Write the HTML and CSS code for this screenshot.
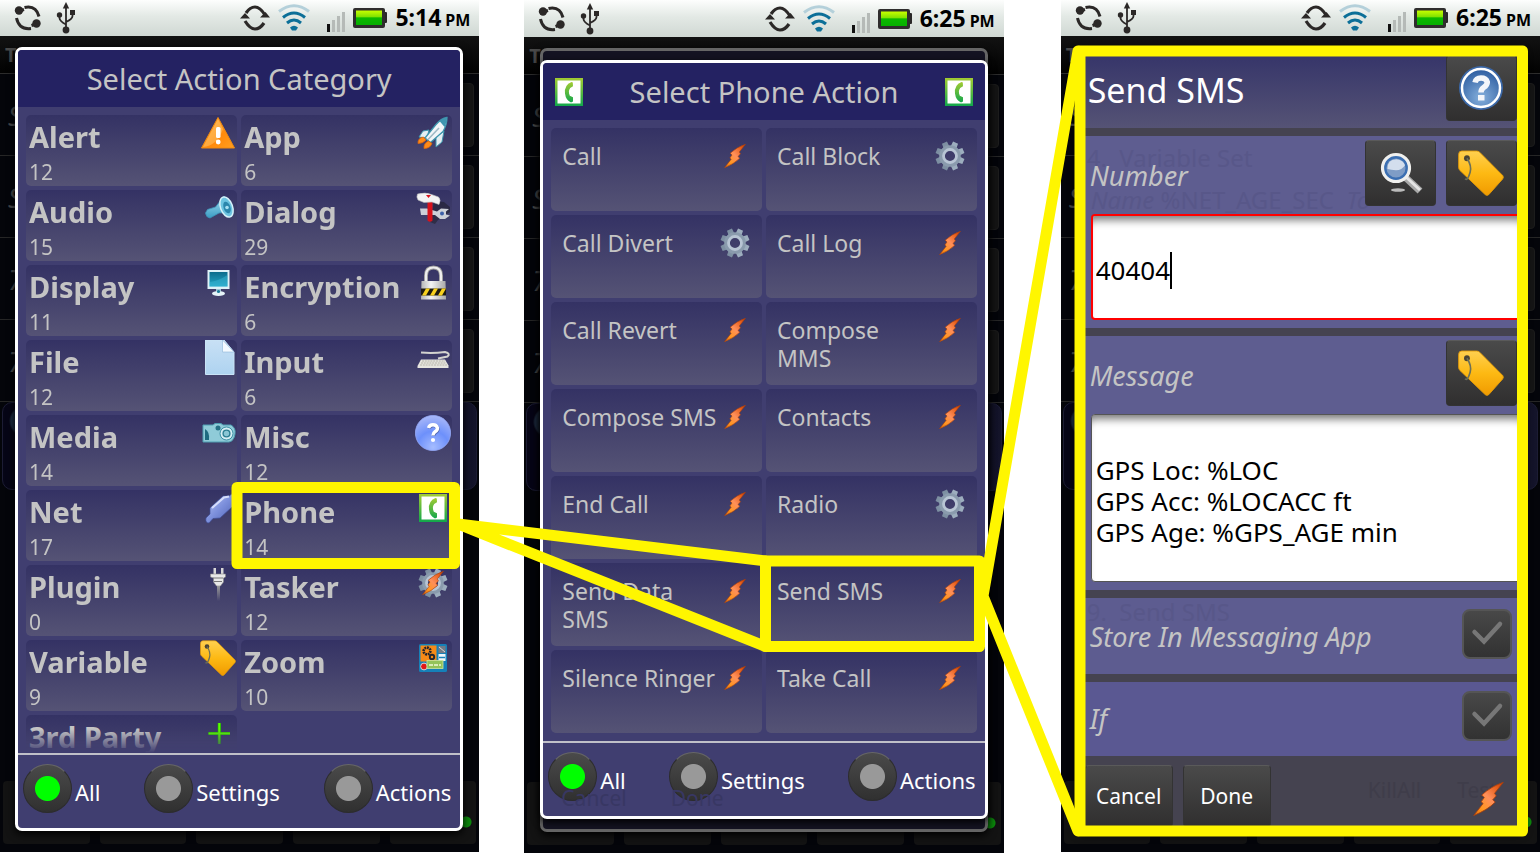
FILE: index.html
```html
<!DOCTYPE html>
<html lang="en">
<head>
<meta charset="utf-8">
<title>Tasker: Send SMS action</title>
<link rel="stylesheet" href="styles.css">
</head>
<body>
<svg class="defs" aria-hidden="true">
  <defs>
    <linearGradient id="gBolt" x1="1" y1="0" x2="0" y2="1"><stop offset="0" stop-color="#c23c08"/><stop offset=".2" stop-color="#e8601c"/><stop offset=".48" stop-color="#ff8f5a"/><stop offset=".75" stop-color="#ff9620"/><stop offset="1" stop-color="#e8700c"/></linearGradient>
    <linearGradient id="gOrange" x1="0" y1="0" x2="1" y2="1"><stop offset="0" stop-color="#ffb648"/><stop offset=".6" stop-color="#ff8a0c"/><stop offset="1" stop-color="#ffa020"/></linearGradient>
    <linearGradient id="gTag" x1="0" y1="0" x2="0" y2="1"><stop offset="0" stop-color="#ffd050"/><stop offset=".5" stop-color="#fdb913"/><stop offset="1" stop-color="#f09a00"/></linearGradient>
    <linearGradient id="gGreen" x1="0" y1="0" x2="0" y2="1"><stop offset="0" stop-color="#a3cc33"/><stop offset="1" stop-color="#12a74c"/></linearGradient>
    <linearGradient id="gGear" x1="0" y1="0" x2="0" y2="1"><stop offset="0" stop-color="#9fb0c0"/><stop offset="1" stop-color="#7b8da0"/></linearGradient>
    <linearGradient id="gBatt" x1="0" y1="0" x2="0" y2="1"><stop offset="0" stop-color="#c8ff00"/><stop offset=".45" stop-color="#7fe000"/><stop offset=".5" stop-color="#0cb800"/><stop offset="1" stop-color="#06b000"/></linearGradient>
    <linearGradient id="gTeal" x1="0" y1="0" x2="0" y2="1"><stop offset="0" stop-color="#0b6c8c"/><stop offset="1" stop-color="#25a9c9"/></linearGradient>
    <linearGradient id="gHorn" x1="0" y1="0" x2="0" y2="1"><stop offset="0" stop-color="#a8e0f2"/><stop offset="1" stop-color="#3a9cc4"/></linearGradient>
    <linearGradient id="gPaper" x1="0" y1="0" x2="0" y2="1"><stop offset="0" stop-color="#c8e0f5"/><stop offset="1" stop-color="#aed3f0"/></linearGradient>
    <linearGradient id="gSilver" x1="0" y1="0" x2="1" y2="0"><stop offset="0" stop-color="#b4b4b4"/><stop offset=".4" stop-color="#f4f4f4"/><stop offset="1" stop-color="#a8a8a8"/></linearGradient>
    <linearGradient id="gJack" x1="0" y1="0" x2="1" y2="1"><stop offset="0" stop-color="#c2cdf6"/><stop offset=".5" stop-color="#7d90dc"/><stop offset="1" stop-color="#4a5cae"/></linearGradient>
    <radialGradient id="gMisc" cx=".5" cy=".9" r=".9"><stop offset="0" stop-color="#a5bcff"/><stop offset=".5" stop-color="#6d90fb"/><stop offset="1" stop-color="#a9b8f8"/></radialGradient>
    <radialGradient id="gHelp" cx=".5" cy=".75" r=".75"><stop offset="0" stop-color="#86b0dc"/><stop offset="1" stop-color="#2c5ca0"/></radialGradient>
    <linearGradient id="gCord" x1="0" y1="0" x2="0" y2="1"><stop offset="0" stop-color="#999"/><stop offset="1" stop-color="#999" stop-opacity="0"/></linearGradient>

    <symbol id="i-swap" viewBox="0 0 28 28"><g fill="none" stroke="#2b2827" stroke-width="3"><path d="M10.500 3.500Q22 1 25 12.500"/><path d="M2.500 14Q5 26 17 24.500"/></g><circle cx="5" cy="6.500" r="4.200" fill="#2b2827"/><circle cx="22.500" cy="19.500" r="4.200" fill="#2b2827"/><path d="M5 7l5-1.500M22 20l-4.500 1.500" stroke="#2b2827" stroke-width="3"/></symbol>
    <symbol id="i-usb" viewBox="0 0 20 32"><g fill="none" stroke="#2b2827" stroke-width="1.800"><path d="M10 5v23M3.500 13v3q0 3 6.500 6.500M16.500 11v3q0 3-6.500 6"/></g><path d="M10 0l3.200 6.500H6.800z" fill="#2b2827"/><circle cx="10" cy="28" r="3.400" fill="#2b2827"/><circle cx="3.500" cy="13" r="2.700" fill="#2b2827"/><path d="M14 8h5v5h-5z" fill="#2b2827"/></symbol>
    <symbol id="i-sync" viewBox="0 0 30 26"><g fill="none" stroke="#2b2827" stroke-width="3.200"><path d="M6 8Q10 2 15 2t10 8"/><path d="M24 18q-4 6-9 6T5 16"/></g><path d="M20 12.500h10L25.500 7zM0 13.500h10L5 8z" fill="#2b2827" stroke="none"/></symbol>
    <symbol id="i-wifi" viewBox="0 0 32 28"><g fill="none" stroke-width="3"><path d="M1 7.500q15-11.500 30 0" stroke="#b4d0da"/><path d="M5 13.500q11-9 22 0" stroke="#0c6f98"/><path d="M9 19q7-6 14 0" stroke="#0c6f98"/></g><path d="M12 23.500q4-3.500 8 0l-2 3h-4z" fill="#0c6f98"/></symbol>
    <symbol id="i-signal" viewBox="0 0 18 20"><path d="M0 12h3v8H0z" fill="#111"/><path d="M5 8h3v12H5zM10 4h3v16h-3zM15 0h3v20h-3z" fill="#b5bab7"/></symbol>
    <symbol id="i-batt" viewBox="0 0 34 22"><path d="M30 5h3a1 1 0 0 1 1 1v9a1 1 0 0 1-1 1h-3z" fill="#2a2828"/><rect x="0" y="1" width="32" height="20" rx="2" fill="#2f2d2d"/><rect x="3" y="3.500" width="26" height="14.500" fill="url(#gBatt)"/></symbol>

    <symbol id="i-bolt" viewBox="0 0 22 24"><path d="M21.500.2Q13 3 6.200 9.200L8 11l-2.200 3 1.400 1.200L.5 23.700Q10 20 15.800 14.200L14 12.500l2.500-2.700L15.300 8z" fill="url(#gBolt)" stroke="#a8400e" stroke-width=".6"/></symbol>
    <symbol id="i-gear" viewBox="0 0 30 30"><g fill="url(#gGear)"><g transform="rotate(22.500 15 15)"><path d="M12 5.500L12.300.5h5.400l.3 5zM12 24.500l.3 5h5.400l.3-5z"/><path d="M12 5.500L12.300.5h5.400l.3 5zM12 24.500l.3 5h5.400l.3-5z" transform="rotate(45 15 15)"/><path d="M12 5.500L12.300.5h5.400l.3 5zM12 24.500l.3 5h5.400l.3-5z" transform="rotate(90 15 15)"/><path d="M12 5.500L12.300.5h5.400l.3 5zM12 24.500l.3 5h5.400l.3-5z" transform="rotate(135 15 15)"/></g></g><circle cx="15" cy="15" r="8.300" fill="none" stroke="#8a9bad" stroke-width="5"/><circle cx="15" cy="15" r="6.500" fill="none" stroke="#b8c5d4" stroke-width="2.800"/></symbol>
    <symbol id="i-phone" viewBox="0 0 36 36"><rect x="4" y="4" width="28" height="28" fill="url(#gGreen)"/><rect x="6.500" y="6.500" width="23" height="23" fill="#fff"/><path d="M20.500 8q-7.500 3-6.500 11.500.8 6.800 6 9l2-1v-4.200l-3.200-1.600q-2-4.300.4-7.700L22 12.300 21.800 8.500z" fill="url(#gGreen)"/></symbol>
    <symbol id="i-alert" viewBox="0 0 36 36"><path d="M18 2.500L34.500 33H1.500z" fill="url(#gOrange)" stroke="#f08a10" stroke-width="1" stroke-linejoin="round"/><path d="M18 4L3 32q14-1 20-18z" fill="#ffc56a" opacity=".5"/><rect x="16" y="12" width="4.500" height="11" rx="1.500" fill="#fff"/><circle cx="18.200" cy="27" r="2.400" fill="#fff"/></symbol>
    <symbol id="i-rocket" viewBox="0 0 36 36"><path d="M14 15l-6 1-4 6 8 1zM21 22v10l6-5 2-11z" fill="#e4eef2" stroke="#3d95ad" stroke-width="1"/><path d="M32 2.500q-6 1-11 7L10 23l5.500 4.500L28 16.500q4-7 4-14z" fill="#f1f5f8" stroke="#3d95ad" stroke-width="1.300"/><path d="M32 2.500q-4 .5-7.500 3.500l5 6q2.500-5 2.500-9.500z" fill="#3f95b0"/><path d="M13 24.500L24 13" stroke="#9cb8c4" stroke-width="1.500"/><path d="M8.500 22q-6 1-5.500 6.500 5 0 8-3.500zM13.500 26q-5 2-4.500 7.500 6 0 8-5z" fill="#ff8b17" stroke="#d86410" stroke-width=".8"/></symbol>
    <symbol id="i-horn" viewBox="0 0 36 36"><path d="M5.500 23l2-3.500 8-2.500L24 6l9 16-14 1-9 5q-4-.5-4.500-5z" fill="url(#gHorn)" stroke="#3c93b8" stroke-width=".8"/><ellipse cx="26.500" cy="17" rx="6" ry="10.500" transform="rotate(-20 26.500 17)" fill="#6cc3e0" stroke="#d5f2fa" stroke-width="1.500"/><ellipse cx="27" cy="17.500" rx="3.400" ry="6" transform="rotate(-20 27 17.500)" fill="#2b86ac"/><circle cx="27" cy="17.500" r="1.800" fill="#a8e0f2"/></symbol>
    <symbol id="i-tools" viewBox="0 0 36 36"><path d="M15 32l5 2 3-4 12-8 0-5-6-5-10-1z" fill="#111" opacity=".4"/><path d="M5 18.500h7l10 3 4-3 8 .5-3 2.500v3l4 1-5 3.500h-5l-5-4H6z" fill="#cdd0d8"/><circle cx="27" cy="23.500" r="2" fill="#3c5fa8"/><path d="M12.500 12h5v18.500q-2.500 2.500-5 0z" fill="#d8121b"/><path d="M2.500 4q8-2 14 .5l7 2.500q3 3 .5 7.500l-7-2.500-8 .5-6-2.500q-2-3-.5-6z" fill="#f3f3f3" stroke="#bbb" stroke-width=".6"/><path d="M11 5h5l-2.500 3z" fill="#d8121b"/></symbol>
    <symbol id="i-monitor" viewBox="0 0 36 36"><rect x="7.500" y="5" width="22" height="19" fill="#dff2f8"/><rect x="9.500" y="7" width="18" height="14.500" fill="url(#gTeal)"/><path d="M9.500 17q9-1 18-7v11.500h-18z" fill="#3fbad6" opacity=".45"/><path d="M16 24h5v3.500h-5z" fill="#9fc7d6"/><ellipse cx="18.500" cy="28.500" rx="6.500" ry="2.500" fill="#e5f3f8"/><circle cx="18.500" cy="26.500" r="1.600" fill="#1a7c98"/></symbol>
    <symbol id="i-lock" viewBox="0 0 36 36"><path d="M11 18V10.500Q11 2.500 18.500 2.500T26 10.500V18" fill="none" stroke="#999" stroke-width="4"/><path d="M11 18V10.500Q11 2.500 18.500 2.500T26 10.500V18" fill="none" stroke="#eee" stroke-width="2.200"/><path d="M6.500 16h24l.5 18.500H6z" fill="url(#gSilver)"/><path d="M6 23.500h25v7H6z" fill="#1d1a10"/><path d="M7 30.500l4-7h4l-4 7zM15 30.500l4-7h4l-4 7zM23 30.500l4-7h4l-4 7z" fill="#f7d01d"/></symbol>
    <symbol id="i-file" viewBox="0 0 36 36"><path d="M5.500 0H24l10 12v22.500H5.500z" fill="url(#gPaper)" stroke="#c9e3f6" stroke-width="1"/><path d="M22.500 0v12H34z" fill="#f4faff" stroke="#8fb7d8" stroke-width=".6"/></symbol>
    <symbol id="i-keyboard" viewBox="0 0 36 36"><path d="M6 12.500q12 1 24-.5 6 1.500 2.500 4.500L23 18.500" fill="none" stroke="#d3d3cf" stroke-width="2"/><path d="M6 19.500h24l3.500 6V28h-31v-2z" fill="#e6e5df"/><path d="M7 21h23M6 23h25M5 25h27" stroke="#aaa79c" stroke-width=".8" stroke-dasharray="2 .8"/></symbol>
    <symbol id="i-camera" viewBox="0 0 36 36"><path d="M3 10h10l2-1.500h6L23 10h8q5 3 4 9-1 7-6 8H3z" fill="#8fcbd8" stroke="#4f9fb2" stroke-width="1"/><path d="M5 14q5 3 4 11H5z" fill="#1d6b80"/><circle cx="18" cy="13" r="2.500" fill="#256f84"/><circle cx="26.500" cy="18.500" r="6.500" fill="#d6eef4" stroke="#3f92a6" stroke-width="1"/><circle cx="26.500" cy="18.500" r="3.400" fill="#8ac6d4" stroke="#2c7e92" stroke-width="1.400"/></symbol>
    <symbol id="i-misc" viewBox="0 0 36 36"><circle cx="18" cy="18" r="17.600" fill="url(#gMisc)" stroke="#96aaf8" stroke-width=".8"/><path d="M14 13.500q1-3 4.500-3t4.500 3.200q0 2.300-2.500 3.800-2 1.300-2 3.500" fill="none" stroke="#35437c" stroke-width="3.400" opacity=".6"/><path d="M13.500 13q1-3.200 4.500-3.200t4.500 3.200q0 2.300-2.500 3.800-2 1.300-2 3.700" fill="none" stroke="#fff" stroke-width="3.400"/><circle cx="18" cy="25" r="2.100" fill="#fff"/></symbol>
    <symbol id="i-jack" viewBox="0 0 36 36"><path d="M6 28l4-4v-6L23 6h6l7-5v13l-4 3-12 11-7 .5L9 33q-4 0-3-5z" fill="url(#gJack)" stroke="#3f4d96" stroke-width=".7"/><path d="M12 18L24 7.500l5-1" stroke="#d5ddfb" stroke-width="2" fill="none"/></symbol>
    <symbol id="i-plug" viewBox="0 0 36 36"><path d="M13.500 3h2.500v7h-2.500zM21 3h2.500v7H21z" fill="#d8d8d8"/><path d="M10.500 9h15v3l-2 1v4l-3 4h-4l-3-4v-4l-3-1z" fill="#e8e8e8" stroke="#888" stroke-width=".6"/><path d="M13 13h10M14 16.500h8" stroke="#777" stroke-width="1"/><path d="M17 21h3v15h-3z" fill="url(#gCord)"/></symbol>
    <symbol id="i-tag" viewBox="0 0 36 36"><path d="M3 .8h11.500q1.500 0 2.500 1L35 20q1 1.300 0 2.600L24 35q-1.300 1-2.600 0L1.500 16q-1-1-1-2.500V3.500Q.5.800 3 .8z" fill="url(#gTag)" stroke="#e39a08" stroke-width=".7"/><circle cx="7" cy="6.500" r="2.300" fill="#4b4434"/><path d="M7 6.500q4 6 2.500 11-2 7-4 5" fill="none" stroke="#6d7058" stroke-width="1.300"/></symbol>
    <symbol id="i-zoom" viewBox="0 0 36 36"><rect x="4" y="4" width="28" height="28" rx="1.500" fill="#1580b8"/><rect x="5.500" y="5.500" width="16" height="16" fill="#f58a18"/><circle cx="12" cy="11" r="3.400" fill="none" stroke="#22242c" stroke-width="2.600" stroke-dasharray="1.900 .7"/><circle cx="17" cy="17" r="2.200" fill="none" stroke="#22242c" stroke-width="1.900"/><rect x="23.500" y="6" width="7" height="7" fill="#707b86"/><path d="M24 7l6 5" stroke="#d8d8d8"/><rect x="23.500" y="14" width="7" height="7" fill="#eef6fa"/><path d="M24 17.500h6" stroke="#1580b8" stroke-width="1.500"/><circle cx="9" cy="26.500" r="3.400" fill="#e01818" stroke="#d5d5d5" stroke-width="1"/><rect x="12" y="20.500" width="16" height="8" fill="#94c35a" stroke="#cde5a0" stroke-width=".8"/><path d="M14 25h12" stroke="#d9ecb8" stroke-width="2" stroke-dasharray="4 1"/></symbol>
    <symbol id="i-plus" viewBox="0 0 36 36"><path d="M8.500 18.500h21.500M19.300 8v21" stroke="#1fae00" stroke-width="3.200"/><path d="M8.500 18.500h21.500M19.300 8v21" stroke="#5cff00" stroke-width="2"/></symbol>
    <symbol id="i-tasker" viewBox="0 0 36 36"><use href="#i-gear" x="3" y="3" width="30" height="30"/><use href="#i-bolt" x="7" y="6" width="22" height="24"/></symbol>
    <symbol id="i-help" viewBox="0 0 46 46"><circle cx="23" cy="23" r="22" fill="#3b68a8"/><circle cx="23" cy="23" r="19" fill="url(#gHelp)" stroke="#fff" stroke-width="2.500"/><path d="M17 17.500q1-4.500 6-4.500t6.300 4q0 3.300-3.500 5.300-2.800 1.700-2.800 5.200" fill="none" stroke="#f4f6fa" stroke-width="5.500"/><rect x="20" y="30" width="6.500" height="5.500" fill="#f4f6fa"/></symbol>
    <symbol id="i-search" viewBox="0 0 46 46"><ellipse cx="21" cy="40" rx="7" ry="1.800" fill="#bbb"/><path d="M28 27l15 14" stroke="#a9a9a9" stroke-width="7"/><path d="M29 27l14 13" stroke="#e5e5e5" stroke-width="3"/><circle cx="19" cy="18" r="13.500" fill="#3b6fb2" stroke="#f0f0ee" stroke-width="3.200"/><circle cx="19" cy="18" r="9.500" fill="#7f9dc6"/><path d="M10.500 19q-.5-9.500 9-9.800 7 1 8.500 6-3 5-9 5-5-.5-8.500-1.200z" fill="#d3deed"/></symbol>
    <symbol id="i-check" viewBox="0 0 50 50"><path d="M12.500 23l9.500 9.500L38 15" fill="none" stroke="#777" stroke-width="4.500" stroke-linecap="round"/></symbol>
  </defs>
</svg>

<main class="board">
  <section class="phone phone-first">
    <div class="status">
      <svg class="s-swap"><use href="#i-swap"/></svg><svg class="s-usb"><use href="#i-usb"/></svg>
      <svg class="s-sync"><use href="#i-sync"/></svg><svg class="s-wifi"><use href="#i-wifi"/></svg><svg class="s-signal"><use href="#i-signal"/></svg><svg class="s-batt"><use href="#i-batt"/></svg>
      <span class="clock">5:14 <small>PM</small></span>
    </div>
    <div class="screen">
      <div class="backdrop" aria-hidden="true">
        <div class="bar">T</div>
        <div class="row"><i>S</i><b></b></div><div class="row"><i>S</i><b></b></div><div class="row"><i>7</i><b></b></div><div class="row"><i>7</i><b></b></div>
        <div class="current"></div>
        <div class="tools"><span></span><span></span><span></span><span></span><span class="on"></span></div>
      </div>
      <div class="dialog">
        <h2 class="title">Select Action Category</h2>
        <div class="list fade">
          <button class="cat"><span>Alert<small>12</small></span><svg><use href="#i-alert"/></svg></button>
          <button class="cat"><span>App<small>6</small></span><svg><use href="#i-rocket"/></svg></button>
          <button class="cat"><span>Audio<small>15</small></span><svg><use href="#i-horn"/></svg></button>
          <button class="cat"><span>Dialog<small>29</small></span><svg><use href="#i-tools"/></svg></button>
          <button class="cat"><span>Display<small>11</small></span><svg><use href="#i-monitor"/></svg></button>
          <button class="cat"><span>Encryption<small>6</small></span><svg><use href="#i-lock"/></svg></button>
          <button class="cat"><span>File<small>12</small></span><svg><use href="#i-file"/></svg></button>
          <button class="cat"><span>Input<small>6</small></span><svg><use href="#i-keyboard"/></svg></button>
          <button class="cat"><span>Media<small>14</small></span><svg><use href="#i-camera"/></svg></button>
          <button class="cat"><span>Misc<small>12</small></span><svg><use href="#i-misc"/></svg></button>
          <button class="cat"><span>Net<small>17</small></span><svg><use href="#i-jack"/></svg></button>
          <button class="cat"><span>Phone<small>14</small></span><svg><use href="#i-phone"/></svg></button>
          <button class="cat"><span>Plugin<small>0</small></span><svg><use href="#i-plug"/></svg></button>
          <button class="cat"><span>Tasker<small>12</small></span><svg><use href="#i-tasker"/></svg></button>
          <button class="cat"><span>Variable<small>9</small></span><svg><use href="#i-tag"/></svg></button>
          <button class="cat"><span>Zoom<small>10</small></span><svg><use href="#i-zoom"/></svg></button>
          <button class="cat"><span>3rd Party</span><svg><use href="#i-plus"/></svg></button>
        </div>
        <div class="filters">
          <label><input type="radio" name="cat" checked><span>All</span></label>
          <label><input type="radio" name="cat"><span>Settings</span></label>
          <label><input type="radio" name="cat"><span>Actions</span></label>
        </div>
      </div>
    </div>
  </section>

  <section class="phone phone-second">
    <div class="status">
      <svg class="s-swap"><use href="#i-swap"/></svg><svg class="s-usb"><use href="#i-usb"/></svg>
      <svg class="s-sync"><use href="#i-sync"/></svg><svg class="s-wifi"><use href="#i-wifi"/></svg><svg class="s-signal"><use href="#i-signal"/></svg><svg class="s-batt"><use href="#i-batt"/></svg>
      <span class="clock">6:25 <small>PM</small></span>
    </div>
    <div class="screen">
      <div class="backdrop" aria-hidden="true">
        <div class="bar">T</div>
        <div class="row"><i>S</i><b></b></div><div class="row"><i>S</i><b></b></div><div class="row"><i>7</i><b></b></div><div class="row"><i>7</i><b></b></div>
        <div class="current"></div>
        <div class="tools"><span></span><span></span><span></span><span></span><span class="on"></span></div>
      </div>
      <div class="dialog dimmed" aria-hidden="true"></div>
      <div class="dialog front">
        <h2 class="title with-icons"><svg><use href="#i-phone"/></svg><span>Select Phone Action</span><svg><use href="#i-phone"/></svg></h2>
        <div class="list">
          <button class="act"><span>Call</span><svg><use href="#i-bolt" x="7" y="6" width="22" height="24"/></svg></button>
          <button class="act"><span>Call Block</span><svg><use href="#i-gear" x="3" y="3" width="30" height="30"/></svg></button>
          <button class="act"><span>Call Divert</span><svg><use href="#i-gear" x="3" y="3" width="30" height="30"/></svg></button>
          <button class="act"><span>Call Log</span><svg><use href="#i-bolt" x="7" y="6" width="22" height="24"/></svg></button>
          <button class="act"><span>Call Revert</span><svg><use href="#i-bolt" x="7" y="6" width="22" height="24"/></svg></button>
          <button class="act"><span>Compose MMS</span><svg><use href="#i-bolt" x="7" y="6" width="22" height="24"/></svg></button>
          <button class="act"><span>Compose SMS</span><svg><use href="#i-bolt" x="7" y="6" width="22" height="24"/></svg></button>
          <button class="act"><span>Contacts</span><svg><use href="#i-bolt" x="7" y="6" width="22" height="24"/></svg></button>
          <button class="act"><span>End Call</span><svg><use href="#i-bolt" x="7" y="6" width="22" height="24"/></svg></button>
          <button class="act"><span>Radio</span><svg><use href="#i-gear" x="3" y="3" width="30" height="30"/></svg></button>
          <button class="act"><span>Send Data SMS</span><svg><use href="#i-bolt" x="7" y="6" width="22" height="24"/></svg></button>
          <button class="act"><span>Send SMS</span><svg><use href="#i-bolt" x="7" y="6" width="22" height="24"/></svg></button>
          <button class="act"><span>Silence Ringer</span><svg><use href="#i-bolt" x="7" y="6" width="22" height="24"/></svg></button>
          <button class="act"><span>Take Call</span><svg><use href="#i-bolt" x="7" y="6" width="22" height="24"/></svg></button>
        </div>
        <div class="filters">
          <label><input type="radio" name="act" checked><span>All</span></label>
          <label><input type="radio" name="act"><span>Settings</span></label>
          <label><input type="radio" name="act"><span>Actions</span></label>
        </div>
        <div class="ghost ghost-buttons" aria-hidden="true"><span>Cancel</span><span>Done</span></div>
      </div>
    </div>
  </section>

  <section class="phone phone-third">
    <div class="status">
      <svg class="s-swap"><use href="#i-swap"/></svg><svg class="s-usb"><use href="#i-usb"/></svg>
      <svg class="s-sync"><use href="#i-sync"/></svg><svg class="s-wifi"><use href="#i-wifi"/></svg><svg class="s-signal"><use href="#i-signal"/></svg><svg class="s-batt"><use href="#i-batt"/></svg>
      <span class="clock">6:25 <small>PM</small></span>
    </div>
    <div class="screen">
      <div class="backdrop" aria-hidden="true">
        <div class="bar">T</div>
        <div class="row"><i>S</i><b></b></div><div class="row"><i>S</i><b></b></div><div class="row"><i>7</i><b></b></div><div class="row"><i>7</i><b></b></div>
        <div class="current"></div>
        <div class="tools"><span></span><span></span><span></span><span></span><span class="on"></span></div>
      </div>
      <form class="dialog editor">
        <div class="editor-head"><h2>Send SMS</h2><button type="button" class="key" aria-label="Help"><svg><use href="#i-help"/></svg></button></div>
        <div class="field">
          <div class="ghost ghost-step" aria-hidden="true">4. &nbsp;Variable Set</div>
          <div class="ghost ghost-args" aria-hidden="true"><i>Name</i> %NET_AGE_SEC &nbsp;<i>To</i></div>
          <div class="field-head"><label for="number">Number</label><button type="button" class="key" aria-label="Search"><svg><use href="#i-search"/></svg></button><button type="button" class="key" aria-label="Variable"><svg><use href="#i-tag"/></svg></button></div>
          <div class="entry"><input id="number" type="text" value="40404"><i class="caret"></i></div>
        </div>
        <div class="field">
          <div class="field-head"><label for="message">Message</label><button type="button" class="key" aria-label="Variable"><svg><use href="#i-tag"/></svg></button></div>
          <textarea id="message">GPS Loc: %LOC
GPS Acc: %LOCACC ft
GPS Age: %GPS_AGE min</textarea>
        </div>
        <div class="option"><div class="ghost ghost-send" aria-hidden="true">9. &nbsp;Send SMS</div><label for="store">Store In Messaging App</label><span class="tick"><input id="store" type="checkbox"><svg><use href="#i-check"/></svg></span></div>
        <div class="option last"><label for="if">If</label><span class="tick"><input id="if" type="checkbox"><svg><use href="#i-check"/></svg></span></div>
        <div class="editor-foot"><div class="ghost ghost-foot" aria-hidden="true"><span>KillAll</span><span>Test</span></div><button type="button" class="key text">Cancel</button><button type="button" class="key text">Done</button><svg><use href="#i-bolt"/></svg></div>
      </form>
    </div>
  </section>

  <svg class="callouts" viewBox="0 0 1540 854" preserveAspectRatio="none" aria-hidden="true">
    <g fill="none" stroke="#fff600" stroke-width="11" stroke-linejoin="round" stroke-linecap="round">
      <rect x="237" y="487.500" width="217.500" height="76"/>
      <path d="M765.500 561L458 524L765.500 646.500"/>
      <rect x="765.500" y="561" width="214" height="85.500"/>
      <path d="M1078 51L983 596L1078 831"/>
      <rect x="1080" y="51" width="442.500" height="780"/>
    </g>
  </svg>
</main>
</body>
</html>
```
FILE: styles.css
```css
* { box-sizing: border-box; }
body { margin: 0; background: #fff; font-family: "Noto Sans", "Open Sans", sans-serif; color: #c4c4c4; }
button, input, textarea { font: inherit; color: inherit; }
button { border: 0; padding: 0; text-align: left; cursor: pointer; }
h2 { margin: 0; font-weight: 400; }
svg { display: block; flex: none; }
.defs { position: absolute; width: 0; height: 0; }

.board { position: relative; display: flex; min-height: 100vh; padding-bottom: 2px; }
.phone { flex: 1 1 0; min-width: 0; display: flex; flex-direction: column; }
.phone-first { margin-right: 45px; }
.phone-second { margin-right: 57px; margin-bottom: -1px; }
.phone-second .status { height: 37px; padding-top: 1px; }
.phone-second .dialog { margin-left: 16px; }

.status { height: 36px; display: flex; align-items: center; padding: 0 9px 0 14px; color: #000; background: linear-gradient(#fdfefd, #e3e9e5 45%, #d0d8d3); }
.s-swap { width: 28px; height: 28px; margin-right: 14px; }
.s-usb { width: 20px; height: 32px; }
.s-sync { width: 30px; height: 26px; margin-left: auto; }
.s-wifi { width: 32px; height: 28px; margin-left: 8px; }
.s-signal { width: 18px; height: 20px; margin: 8px 8px 0 17px; }
.s-batt { width: 34px; height: 22px; margin-right: 8px; }
.clock { font-weight: 700; font-size: 23px; line-height: 32px; white-space: nowrap; }
.clock small { font-size: 16px; margin-left: -2px; }

.screen { flex: 1; display: grid; grid-template-columns: minmax(0, 1fr); background: #04050a; }
.screen > * { grid-area: 1 / 1; }

.backdrop { display: flex; flex-direction: column; color: #4a4a4a; padding-bottom: 8px; }
.bar { height: 38px; padding: 5px; font-weight: 700; font-size: 20px; line-height: 28px; background: linear-gradient(#121212, #020202); border-bottom: 1px solid #2c2c2c; }
.row { height: 82px; display: flex; justify-content: space-between; align-items: center; padding: 0 5px 0 8px; border-bottom: 1px solid #262626; font-size: 28px; }
.row b { width: 70px; height: 64px; border-radius: 4px; background: #151515; border: 1px solid #1c1c1c; }
.current { height: 88px; margin: 0 2px; border: 1px solid #1c1c34; border-radius: 10px; background: radial-gradient(circle at 22px 18px, #1d2b40 14px, transparent 16px), linear-gradient(90deg, #060516 80%, #14142a); }
.tools { margin-top: auto; height: 63px; display: flex; gap: 10px; padding: 0 3px; }
.tools span { flex: 1; border-radius: 4px; background: #131313; }
.tools .on { background: radial-gradient(circle at 76px 41px, #0c8c0c 5px, #131313 6px); }

.dialog { position: relative; margin: 11px 16px 21px 15px; display: flex; flex-direction: column; border: 3px solid #fff; border-radius: 7px; background: #403e70; box-shadow: 0 3px 8px #000; overflow: hidden; }
.dimmed { border-color: #666; background: #141322; }
.front { margin-top: 23px; align-self: start; margin-bottom: 0; }
.title { height: 57px; display: flex; align-items: center; justify-content: center; background: #242262; font-size: 29px; white-space: nowrap; }
.with-icons { justify-content: space-between; padding: 0 8px; }
.with-icons svg { width: 36px; height: 36px; }
.list { flex: 1; display: grid; grid-template-columns: 1fr 1fr; gap: 4px; align-content: start; padding: 8px; }
.fade { flex: 1 1 0; min-height: 0; overflow: hidden; mask-image: linear-gradient(#000 calc(100% - 24px), transparent); }
.cat, .act { display: flex; align-items: flex-start; border-radius: 5px; background: linear-gradient(#343264, #555375); }
.cat { height: 71px; padding: 0 1px 0 3px; }
.cat span { flex: 1; font-weight: 700; font-size: 29px; line-height: 44px; white-space: nowrap; }
.cat small { display: block; font-weight: 400; font-size: 21px; line-height: 26px; }
.cat svg { width: 36px; height: 36px; }
.act { height: 83px; padding: 10px 9px 0 11px; }
.act span { flex: 1; padding-top: 4px; font-size: 23px; line-height: 28px; }
.act svg { width: 36px; height: 36px; }

.filters { display: flex; justify-content: space-between; padding: 9px 9px 15px 5px; border-top: 2px solid #c0c0c8; color: #fff; }
.filters label { display: flex; align-items: center; gap: 3px; font-size: 22px; line-height: 28px; }
.filters span { padding-top: 6px; }
.filters input { appearance: none; margin: 0; width: 49px; height: 49px; border-radius: 50%; border: 1px solid #2c2c2c; border-top-color: #666; background: radial-gradient(circle, #999 12px, transparent 13px), linear-gradient(#4a4a4a, #303030); }
.filters input:checked { background: radial-gradient(circle, #0f0 12px, transparent 13px), linear-gradient(#4a4a4a, #303030); }

.ghost { position: absolute; pointer-events: none; white-space: nowrap; font-size: 24px; line-height: 28px; color: #585789; }
.ghost-step { left: 8px; top: 8px; }
.ghost-args { left: 12px; top: 50px; }
.ghost-send { left: 8px; top: 0; }
.ghost-foot { right: 24px; top: 20px; display: flex; gap: 36px; font-size: 21px; color: #3f3d4a; }
.ghost-buttons { left: 18px; bottom: 4px; display: flex; gap: 44px; font-size: 21px; color: #383763; }

.editor { background: #454350; gap: 8px; }
.editor-head { height: 78px; display: flex; justify-content: space-between; padding: 5px 4px 0 9px; background: linear-gradient(#33325f, #37366a 10%, #555375); color: #fff; }
.editor-head h2 { font-size: 34px; line-height: 70px; }
.key { position: relative; width: 71px; height: 66px; display: flex; align-items: center; justify-content: center; border-radius: 4px; border: 1px solid #333; border-top-color: #5a5a5a; background: linear-gradient(#4a4a4a, #302f2f); }
.key svg { width: 46px; height: 46px; }
.field { position: relative; background: #5e5d90; padding: 4px 0 8px; }
.field-head { position: relative; display: flex; gap: 10px; padding: 0 4px 0 11px; margin-bottom: 8px; }
.field-head label { flex: 1; padding-top: 14px; }
.field-head label, .option label { font-style: italic; font-size: 27px; line-height: 44px; }
.entry { position: relative; }
.entry input, textarea { display: block; width: calc(100% - 12px); margin-left: 12px; border-radius: 4px; background: #fff; color: #000; outline: 0; resize: none; font-size: 26px; line-height: 31px; box-shadow: inset 0 10px 9px -6px #777; }
.entry input { height: 106px; border: 2px solid #f00; padding: 6px 3px 0; }
textarea { height: 168px; border: 1px solid #555; padding: 40px 4px 0; overflow: hidden; }
.caret { position: absolute; left: 91px; top: 38px; width: 2px; height: 37px; background: #000; }
.option { position: relative; height: 76px; display: flex; justify-content: space-between; padding: 11px 9px 0 11px; background: #5d5c90; }
.option label { position: relative; padding-top: 6px; }
.last { height: 74px; padding-top: 9px; margin-bottom: -8px; background: #5a5892; }
.tick { display: grid; width: 50px; height: 50px; }
.tick > * { grid-area: 1 / 1; }
.tick input { appearance: none; margin: 0; border-radius: 8px; border: 2px solid #555; background: linear-gradient(#484848, #323232); }
.tick svg { width: 50px; height: 50px; pointer-events: none; }
.editor-foot { position: relative; flex: 1; display: flex; gap: 10px; padding: 9px 17px 0 6px; color: #fff; }
.editor-foot .text { width: 88px; height: 62px; font-size: 21px; }
.editor-foot svg { position: relative; width: 31px; height: 36px; margin: 16px 0 0 auto; }
.callouts { position: absolute; left: 0; top: 0; width: 100%; height: 100%; pointer-events: none; }
```
